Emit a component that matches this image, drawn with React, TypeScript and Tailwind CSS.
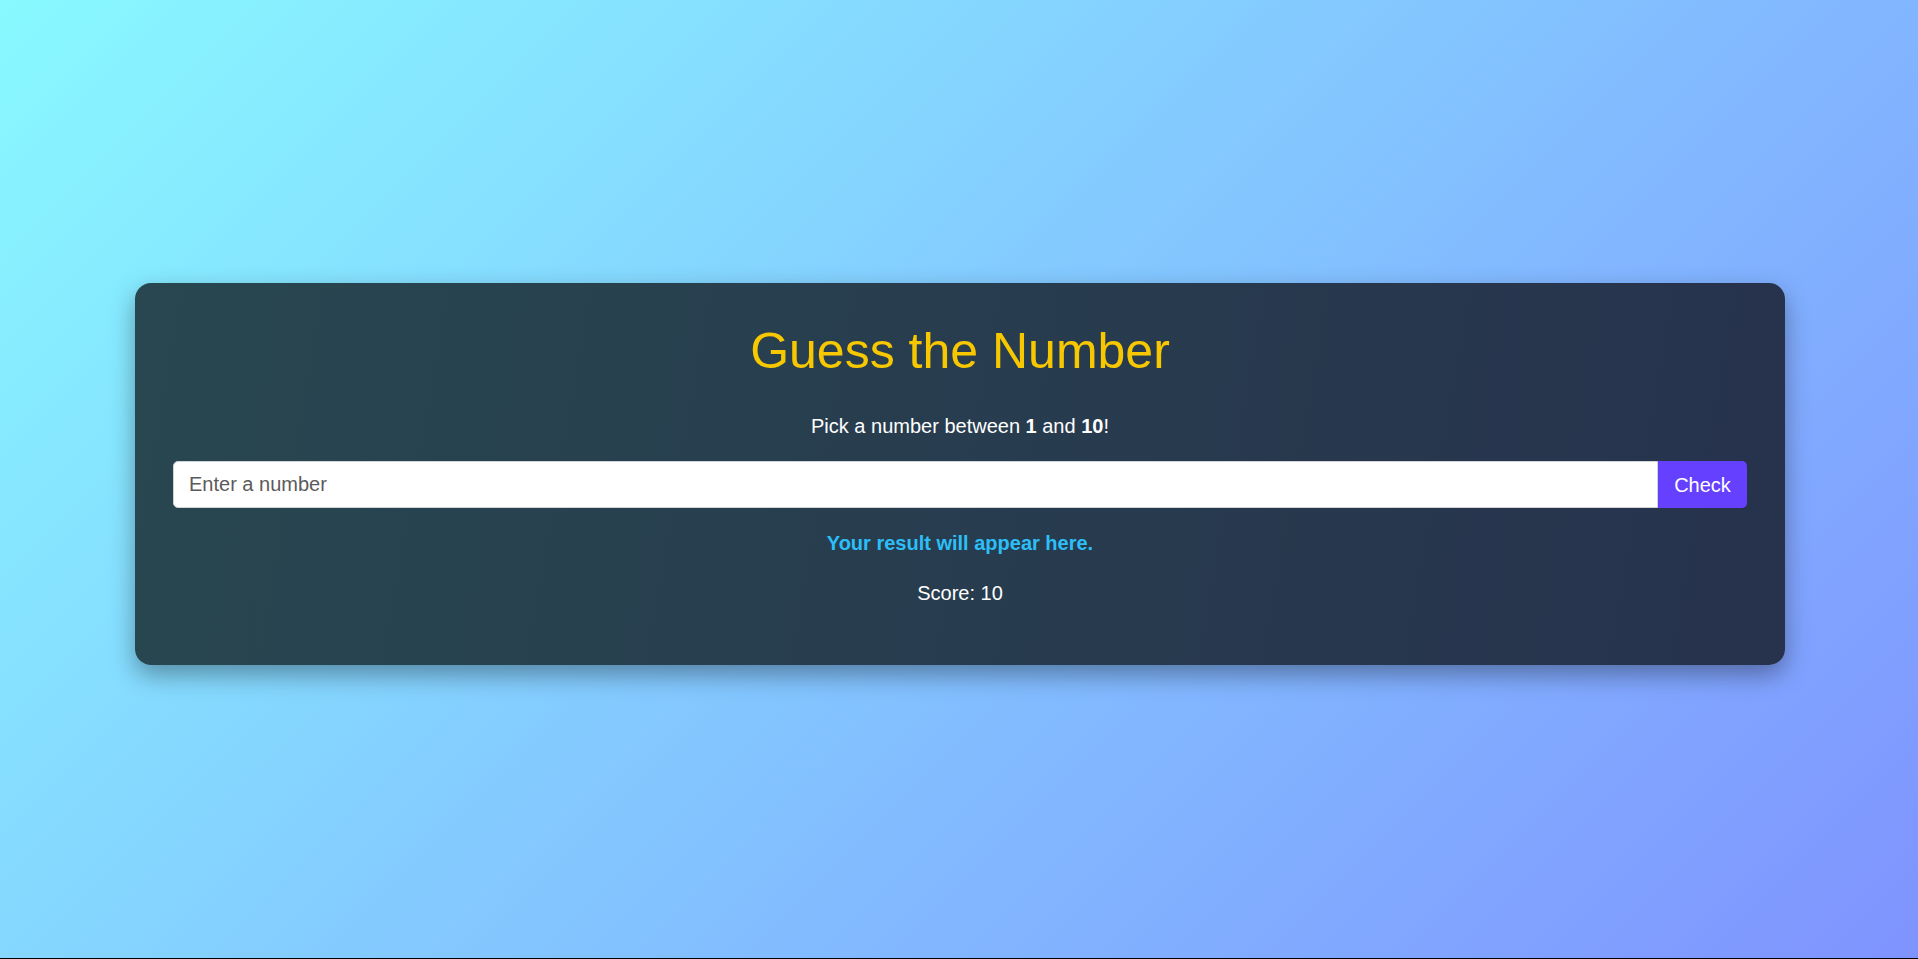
import React from "react";

export default function App() {
  return (
    <div className="bg-black h-[959px] w-full" style={{ fontFamily: '"Liberation Sans", Arial, sans-serif' }}>
      <div className="h-[958px] w-full flex justify-start items-start pt-[283px] pl-[135px] bg-[linear-gradient(135deg,#88f9ff_0%,#83c6ff_50%,#7f93ff_100%)]">
        <div className="w-[1650px] rounded-[16px] pt-[39px] px-[38px] pb-[60px] bg-[linear-gradient(100deg,#284750,#27324d)] shadow-[0_10px_25px_rgba(0,0,0,0.35)] flex flex-col items-center text-center">
          <h1 className="text-[50px] leading-[58px] text-[#f7c700] font-normal">Guess the Number</h1>
          <p className="mt-[35px] text-[20px] leading-[23px] text-white">
            Pick a number between <b>1</b> and <b>10</b>!
          </p>
          <div className="mt-[23px] w-full flex h-[47px]">
            <input
              type="text"
              placeholder="Enter a number"
              className="flex-1 h-full bg-white rounded-l-[5px] border border-[#d0d4d8] px-[15px] text-[20px] text-[#333] placeholder:text-[#5b5b5b] outline-none"
              style={{ fontFamily: '"Liberation Sans", Arial, sans-serif' }}
            />
            <button className="h-full w-[89px] bg-[#6541ff] text-white text-[20px] rounded-r-[5px]">Check</button>
          </div>
          <p className="mt-[24px] text-[20px] leading-[23px] font-bold text-[#2cbff7]">Your result will appear here.</p>
          <p className="mt-[27px] text-[20px] leading-[23px] text-white">Score: 10</p>
        </div>
      </div>
    </div>
  );
}
